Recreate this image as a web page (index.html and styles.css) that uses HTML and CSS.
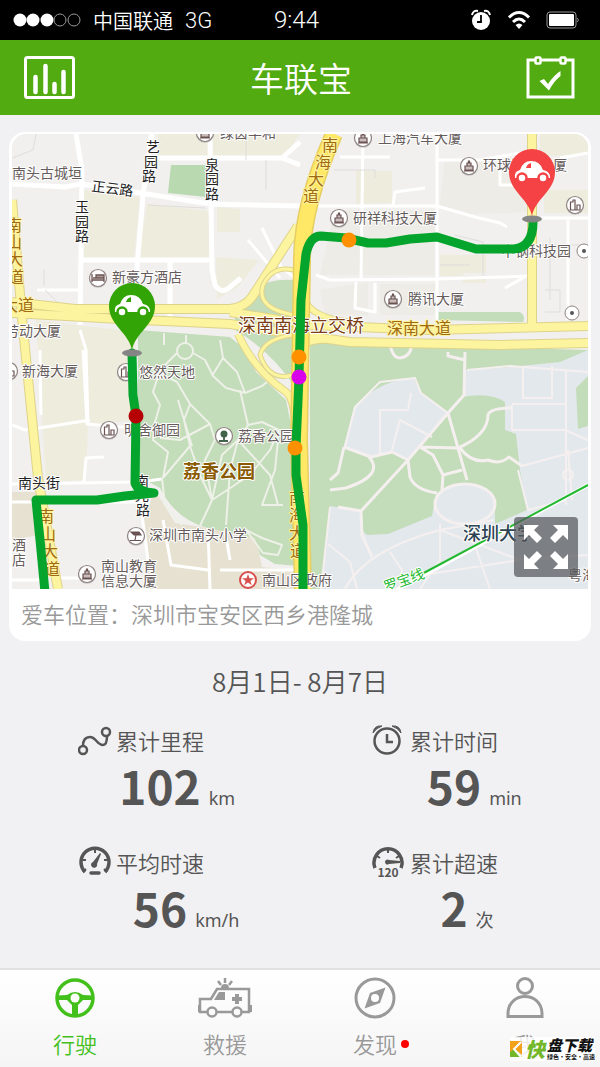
FILE: index.html
```html
<!DOCTYPE html>
<html lang="zh-CN">
<head>
    <meta charset="UTF-8">
    <meta name="viewport" content="width=device-width, initial-scale=1.0">
    <title>车联宝</title>
    <link rel="stylesheet" href="styles.css">
</head>
<body>
    <div class="status-bar">
        <div class="carrier">
            <svg width="68" height="16" viewBox="0 0 68 16">
                <g fill="#fff"><circle cx="7" cy="8" r="6.500"/><circle cx="20" cy="8" r="6.500"/><circle cx="34" cy="8" r="6.500"/></g>
                <g fill="none" stroke="#999" stroke-width="1"><circle cx="47" cy="8" r="6"/><circle cx="61" cy="8" r="6"/></g>
            </svg>
            <span>中国联通</span>
            <span class="network">3G</span>
        </div>
        <span class="time">9:44</span>
        <div class="indicators">
            <svg width="22" height="24" viewBox="0 0 22 24">
                <circle cx="11" cy="13" r="9" fill="#fff"/>
                <path d="M2 7 Q3 2 8 3M20 7 Q19 2 14 3" fill="none" stroke="#fff" stroke-width="2"/>
                <path d="M11 7v7H7" fill="none" stroke="#000" stroke-width="1.8"/>
            </svg>
            <svg width="24" height="22" viewBox="0 0 24 22">
                <g fill="none" stroke="#fff" stroke-width="3"><path d="M2 8.500Q12-1.500 22 8.500"/><path d="M6 13Q12 7 18 13"/></g>
                <path d="M12 20l-3.500-4Q12 13 15.500 16z" fill="#fff"/>
            </svg>
            <svg width="34" height="20" viewBox="0 0 34 20">
                <rect x="1" y="2" width="29" height="16" rx="3" fill="none" stroke="#999"/>
                <rect x="3" y="4" width="25" height="12" rx="1" fill="#fff"/>
                <path d="M31 8q3 2 0 4" fill="none" stroke="#999"/>
            </svg>
        </div>
    </div>

    <header class="header">
        <button type="button" class="icon-button" aria-label="统计">
            <svg width="52" height="44" viewBox="0 0 52 44" fill="none" stroke="#fff">
                <rect x="1.500" y="1.500" width="48" height="40" rx="2" stroke-width="3"/>
                <path d="M11.500 21v15M21.500 10v26M30.500 28v8M39.500 16v20" stroke-width="4.500" stroke-linecap="round"/>
            </svg>
        </button>
        <h1>车联宝</h1>
        <button type="button" class="icon-button" aria-label="签到">
            <svg width="50" height="44" viewBox="0 0 50 44" fill="none" stroke="#fff">
                <path d="M9 4H2v37h45V4h-7M15 4h19" stroke-width="3"/>
                <rect x="9.500" y="1.500" width="5" height="6" rx="1" stroke-width="2.500"/>
                <rect x="34.500" y="1.500" width="5" height="6" rx="1" stroke-width="2.500"/>
                <path d="M13.500 25l4.500-2 4 5Q28 19 34.500 15v5Q28 25 23 34.500z" fill="#fff" stroke="none"/>
            </svg>
        </button>
    </header>

    <main>
        <section class="map-card">
            <div class="map">
                <svg class="map-view" viewBox="12 134 576 455" role="img" aria-label="行驶轨迹地图">
                    <defs>
                        <g id="ring"><circle r="9" cy="1" fill="#aaa" opacity=".5"/><circle r="8.500" fill="#fff" stroke="#8f8382" stroke-width="1.200"/></g>
                        <g id="tower"><use href="#ring"/><path d="M-5 5h10M-4 4v-4h2v-3h1.500v-2h1v2H2v3h2v4zM-2 0h4" fill="#cbbcbc" stroke="#6b5352" stroke-width="1.200"/></g>
                        <g id="block"><use href="#ring"/><path d="M-4.500 5V-3h2.500v-2H0V5M2 5V0h3v5M-5.500 5h11" fill="none" stroke="#6b5352" stroke-width="1.200"/></g>
                        <g id="hotel"><use href="#ring"/><path d="M-6-4v8M-6 2H6M6-1v5M-5 0h11v-3H-2v3z" fill="#ad9c9b" stroke="#6b5352" stroke-width="1.300"/></g>
                        <g id="tree"><use href="#ring"/><circle cy="-2" r="3.500" fill="#41634a"/><path d="M0-2v7M-5 5h9" stroke="#41634a" stroke-width="1.800"/></g>
                        <g id="school"><use href="#ring"/><path d="M-5-4h8l2 3h-7zM0-1l-1 5M-6 4.500h11" fill="#6b5352" stroke="#6b5352" stroke-width="1.200"/></g>
                        <g id="spot"><circle r="7" fill="#fff" stroke="#8f8382"/><circle r="2" fill="#555"/></g>
                        <g id="pin">
                            <path d="M0 0C-3-17-23-25-23-44a23 23 0 0 1 46 0C23-25 3-17 0 0z"/>
                            <path d="M-17-38q-1-7 5-8 3-9 11-9 9 0 12 9 6 1 7 6v2z" fill="#fff"/>
                            <path d="M-6-48q1-4 5-5v5z"/>
                            <g fill="#fff" stroke-width="2.500"><circle cx="-10" cy="-38" r="4.500"/><circle cx="11" cy="-38" r="4.500"/></g>
                        </g>
                    </defs>

                    <rect x="12" y="134" width="576" height="455" fill="#f1f0ee"/>

                    <!-- city blocks -->
                    <g fill="#eeecdd">
                        <path d="M158 134H300L283 158 158 158z"/>
                        <path d="M84 190L140 197 134 258H84zM147 204L209 211V260H138zM217 207L240 209V232H217zM216 257L259 260 238 287 217 299z"/>
                        <path d="M36 320L135 332 137 420 88 425 86 480 46 482z"/>
                        <path d="M12 492L38 492 44 534 12 540zM155 490L175 523 255 535 262 567 297 570V589H150L143 520z" fill="#e6e1d1"/>
                        <path d="M356 171H392V203L356 204zM544 190H588V213H544zM440 255H486V276H440zM463 283H486V273H463zM540 134H588V155L540 156z"/>
                        <path d="M445 158L530 166V212L470 214 440 205zM335 210H435V275H320zM320 290L368 282V316L325 315zM380 284H435V315H380z" fill="#edece6"/>
                    </g>
                    <path d="M171 165H208L206 197 168 193z" fill="#b9d9b0"/>

                    <!-- park and campus -->
                    <g fill="#c3dcb9">
                        <path d="M138 330L230 337Q248 350 256 372L286 400 294 440 298 566 275 564 260 555 255 538 208 528Q176 520 160 488L138 476z"/>
                        <path d="M258 288Q270 278 295 280V387Q270 350 235 330V305z"/>
                        <path d="M437 312H520Q526 316 523 322L437 320z"/>
                    </g>
                    <path d="M312 350L588 350V589H312z" fill="#e3e8ed"/>
                    <g fill="#c3dcb9">
                        <path d="M310 342L370 344 588 350 560 362 500 368 465 370 463 395 448 413 421 393 414 379Q382 378 354 407L344 445 330 506 321 589H310z"/>
                        <path d="M344 447L371 457 392 452 410 460 362 511 330 506 336 468z"/>
                        <path d="M362 512L408 460 449 412 462 397Q490 392 505 402V430L516 434 520 470 527 510 495 524V497Q480 483 457 484L436 494 432 516 388 534 367 535 362 530z"/>
                        <path d="M576 388L588 376V426L578 429z"/>
                    </g>
                    <ellipse cx="465" cy="504" rx="30" ry="20" fill="#e3e8ed" stroke="#f5f0ef" stroke-width="3"/>

                    <!-- minor roads -->
                    <g fill="none" stroke="#fff" stroke-width="5" stroke-linejoin="round">
                        <path d="M76 134L82 170 80 325M12 184L65 187 81 184 147 194 210 204 300 206M152 134L143 195 137 268V325M210 134L212 270 215 285Q222 295 230 287L241 278M80 260H212M158 158H282L300 142M170 262V318M282 158L300 165"/>
                        <path d="M262 228L281 267 300 282M248 240L280 278M37 290H82M12 484L140 482 162 479M88 425L86 350 80 330M40 350L41 415M83 350L87 424 132 428M12 425L25 430 65 424 90 420M84 482L86 458 104 457M12 502H150M12 580H40M55 578H90M140 500L148 560M208 528L210 589M163 520L171 565 208 570M225 530L230 560M220 570H300" stroke-width="3"/>
                        <path d="M315 206H437L475 217 500 223 507 227M437 134V320M363 134L361 280M438 160H480L520 153M340 157H390M316 275L330 280 437 279 530 276M375 283V312L355 308 356 282M505 288L530 274M540 218H588M568 218V320M393 205L395 192 425 188M560 158L588 153M500 170V185H528" stroke-width="3"/>
                    </g>
                    <g fill="none" stroke="#dedddb" stroke-width="1">
                        <path d="M36 134L33 150 12 158M44 270V286M45 290L60 305M246 134V160M266 160V190M148 205L205 208M334 170H375V178M455 235L483 242V276M542 245H588M545 290H560V312H545M550 238V300M440 265H470"/>
                    </g>

                    <!-- paths in the park -->
                    <g fill="none" stroke="#eef1e8" stroke-width="2" stroke-linejoin="round">
                        <circle cx="185" cy="351" r="8"/>
                        <path d="M164 333V345M186 335V343M193 353L205 360 213 376 226 388 245 393 262 386 272 378M177 353L160 370 153 392 160 405 155 422 153 440 168 452 163 478M163 478L190 446 184 420 190 404 177 382 160 373M190 404L210 424 215 440 205 460 212 500 200 526M210 424L180 440 160 438M190 446L200 475 212 500 250 475 270 450 279 430 262 422 248 425 238 440 230 470 226 525M238 440L270 475 278 505M248 425L240 390M212 376L223 358 237 372 245 393M279 430L275 470 262 505 283 505M162 478L165 505 182 525M246 530L262 538 282 545 278 555 263 553zM223 358L220 340M238 440L222 455 212 500M192 446L178 400"/>
                    </g>
                    <g fill="none" stroke="#f5f0ef" stroke-width="3" stroke-linejoin="round">
                        <path d="M338 507L361 511 408 460 448 413 464 395 465 352M344 447L371 457 392 452 408 460 410 477Q415 490 437 493M448 413L458 448 467 480M458 448L420 447 433 455 443 475 442 490M458 448Q488 435 488 415 490 408 512 408M460 448Q472 464 488 460 500 465 509 457L522 466M369 457Q385 475 346 488L330 490M344 447L338 473 330 480M390 343Q392 358 400 358 410 357 412 345M448 352V356L465 360M443 475L462 470M361 511L362 535 372 557"/>
                        <path stroke-width="2" d="M345 447L355 407 380 382 415 378 421 393 448 413M380 454V410H408L411 393M392 450L400 420 432 437M467 370L510 366 588 372M523 366V398H552V366M512 404H566M512 430H565L588 440M566 370V505M512 430V405M522 466L588 448M518 470L528 510 566 500M330 507L321 589M328 544L350 562 357 589M345 589Q365 550 440 530L494 520M440 524V560L420 589M470 531L490 589M390 552L402 570 400 589M440 530L520 560 588 555M410 577L520 560M568 450L572 500"/>
                        <circle cx="568" cy="475" r="5" stroke-width="2"/>
                    </g>

                    <!-- avenues -->
                    <g fill="none" stroke-linejoin="round">
                        <g stroke="#ded38b" stroke-width="10">
                            <path d="M12 200L22 318 38 478 58 589M12 302L75 309 230 309Q245 307 252 297L298 226M12 313L120 319 230 324 300 335 350 342 500 345 588 343M230 312L310 325 430 330 588 326M532 134V328"/>
                            <path d="M238 334Q254 370 286 392 294 398 296 430" stroke-width="8"/>
                            <path d="M305 300Q312 318 350 322M296 352Q305 339 330 340" stroke-width="7"/>
                        </g>
                        <g stroke="#fdf49f" stroke-width="8">
                            <path d="M12 200L22 318 38 478 58 589M12 302L75 309 230 309Q245 307 252 297L298 226M12 313L120 319 230 324 300 335 350 342 500 345 588 343M230 312L310 325 430 330 588 326M532 134V328"/>
                            <path d="M238 334Q254 370 286 392 294 398 296 430" stroke-width="6"/>
                            <path d="M305 300Q312 318 350 322M296 352Q305 339 330 340" stroke-width="5"/>
                        </g>
                        <g stroke="#ded38b" stroke-width="5"><path d="M300 272Q274 262 263 285 255 310 300 316M296 374Q270 384 260 355 265 337 300 334"/></g>
                        <g stroke="#fdf49f" stroke-width="3"><path d="M300 272Q274 262 263 285 255 310 300 316M296 374Q270 384 260 355 265 337 300 334"/></g>
                        <path d="M334 134Q302 206 302 260L299 440 303 589" stroke="#e6ce63" stroke-width="18"/>
                        <path d="M334 134Q302 206 302 260L299 440 303 589" stroke="#ffe866" stroke-width="15"/>
                    </g>
                    <path d="M375 602L588 485" stroke="#fff" stroke-width="4"/>
                    <path d="M420 575L588 485" stroke="#22b930" stroke-width="2"/>

                    <!-- places -->
                    <g>
                        <use href="#tower" x="205" y="133"/><use href="#tower" x="363" y="138"/>
                        <use href="#tower" x="469" y="166"/><use href="#tower" x="339" y="218"/>
                        <use href="#tower" x="393" y="299"/><use href="#tower" x="87" y="574"/>
                        <use href="#hotel" x="98" y="278"/><use href="#block" x="575" y="205"/>
                        <use href="#block" x="126" y="372"/><use href="#block" x="109" y="430"/>
                        <use href="#block" x="9" y="371"/><use href="#tree" x="224" y="436"/>
                        <use href="#school" x="136" y="536"/>
                        <use href="#spot" x="584" y="251"/><use href="#spot" x="572" y="313"/>
                    </g>
                    <circle cx="248" cy="580" r="8" fill="#fff" stroke="#d8504e" stroke-width="2"/>
                    <path d="M248 574l1.500 4.200h4.500l-3.600 2.700 1.400 4.300-3.800-2.600-3.800 2.600 1.400-4.300-3.600-2.700h4.500z" fill="#d8504e"/>

                    <g class="place">
                        <text x="12" y="178">南头古城垣</text>
                        <text x="220" y="138">绿茵丰和</text>
                        <text x="112" y="282">新豪方酒店</text>
                        <text x="5" y="336">劳动大厦</text>
                        <text x="22" y="376">新海大厦</text>
                        <text x="139" y="377">悠然天地</text>
                        <text x="124" y="435">明舍御园</text>
                        <text x="238" y="441">荔香公园</text>
                        <text x="149" y="540">深圳市南头小学</text>
                        <text x="101" y="571">南山教育</text>
                        <text x="101" y="586">信息大厦</text>
                        <text x="12 12" y="550 565">酒店</text>
                        <text x="262" y="585">南山区政府</text>
                        <text x="378" y="143">上海汽车大厦</text>
                        <text x="483" y="170">环球数码大厦</text>
                        <text x="353" y="223">研祥科技大厦</text>
                        <text x="501" y="256">中钢科技园</text>
                        <text x="408" y="304">腾讯大厦</text>
                        <text x="568" y="580">粤海</text>
                    </g>
                    <g class="street">
                        <text x="91" y="191" transform="rotate(7 91 191)">正云路</text>
                        <text x="146 144 142" y="152 167 181">艺园路</text>
                        <text x="205 205 205" y="170 184 199">泉园路</text>
                        <text x="75 75 75" y="212 227 241">玉园路</text>
                        <text x="18" y="488">南头街</text>
                        <text x="135 135 136" y="486 500 515">南光路</text>
                    </g>
                    <g class="avenue">
                        <text x="6 6 7 8" y="231 248 265 283">南山大道</text>
                        <text x="38 40 42 44" y="522 540 557 575">南山大道</text>
                        <text x="322 315 308 303" y="151 168 185 202">南海大道</text>
                        <text x="289 289 289 290" y="504 521 539 557">南海大道</text>
                        <text x="2" y="311">大道</text>
                        <text x="387" y="334">深南大道</text>
                    </g>
                    <text class="bridge" x="238" y="332">深南南海立交桥</text>
                    <text class="park-name" x="183" y="478">荔香公园</text>
                    <text class="campus-name" x="463" y="540">深圳大学</text>
                    <text class="metro" x="386" y="592" transform="rotate(-20 386 592)">罗宝线</text>

                    <!-- driven route -->
                    <g fill="none" stroke="#05a42c" stroke-width="9" stroke-linejoin="round">
                        <path d="M132 353L133 395 136 416 135 483Q138 492 154 493L125 496 97 500 36 500 40 540 45 592" stroke-linecap="round"/>
                        <path d="M303 592V525L296 475 296 447 299 377 301 300 306 254Q310 236 321 236L346 238 368 243H386L410 239 437 237 476 249H514Q534 247 533 219"/>
                    </g>
                    <g fill="#ff9000"><circle cx="349" cy="240" r="7.500"/><circle cx="299" cy="357" r="7.500"/><circle cx="295" cy="448" r="7.500"/></g>
                    <circle cx="299" cy="377" r="7.500" fill="#d900ea"/>
                    <circle cx="136" cy="416" r="7.500" fill="#b50006"/>
                    <g fill="#858585"><ellipse cx="132" cy="353" rx="10" ry="3.500"/><ellipse cx="532" cy="219" rx="10" ry="3.500"/></g>
                    <use href="#pin" x="132" y="350" fill="#33a406" stroke="#33a406" stroke-width="0"/>
                    <use href="#pin" x="532" y="216" fill="#f44245" stroke="#f44245" stroke-width="0"/>
                </svg>
                <button type="button" class="expand" aria-label="全屏">
                    <svg width="44" height="44" viewBox="0 0 44 44" fill="#fff">
                        <path id="arrow" d="M0 0h15l-5 5 8 8-5 5-8-8-5 5z"/>
                        <use href="#arrow" transform="matrix(-1 0 0 1 44 0)"/>
                        <use href="#arrow" transform="matrix(1 0 0 -1 0 44)"/>
                        <use href="#arrow" transform="rotate(180 22 22)"/>
                    </svg>
                </button>
            </div>
            <p class="location">爱车位置：深圳市宝安区西乡港隆城</p>
        </section>

        <h2 class="period">8月1日- 8月7日</h2>

        <section class="stats">
            <div class="stat">
                <svg class="stat-icon" viewBox="0 0 34 34" fill="none" stroke="#555" stroke-width="2.500">
                    <circle cx="5" cy="27" r="4"/><circle cx="28" cy="9" r="4"/>
                    <path d="M5 23Q5 14 12 14C18 14 19 22 25 22Q29 22 29 13"/>
                </svg>
                <h3>累计里程</h3>
                <p class="value"><strong>102</strong><span>km</span></p>
            </div>
            <div class="stat">
                <svg class="stat-icon" viewBox="0 0 34 34" fill="none" stroke="#555" stroke-width="2.500">
                    <circle cx="15" cy="18" r="12.500"/><path d="M15 11v8h6"/>
                    <path d="M1 10Q2 2 10 3 4 5 1 10zM29 10Q28 2 20 3 26 5 29 10z" fill="#555" stroke-width="1"/>
                </svg>
                <h3>累计时间</h3>
                <p class="value"><strong>59</strong><span>min</span></p>
            </div>
            <div class="stat">
                <svg class="stat-icon" viewBox="0 0 34 34" fill="none" stroke="#555">
                    <path d="M7 27A14 14 0 1 1 27 27" stroke-width="3.500"/>
                    <path d="M17 4v4M4 15h4M30 15h-4M8 24l-3 3M26 24l3 3" stroke-width="2"/>
                    <path d="M22 8l1 1-4 10a3 3 0 1 1-4-2z" fill="#555" stroke="none"/>
                    <path d="M13 28h8" stroke-width="3.500" stroke-linecap="round"/>
                </svg>
                <h3>平均时速</h3>
                <p class="value"><strong>56</strong><span>km/h</span></p>
            </div>
            <div class="stat">
                <svg class="stat-icon" viewBox="0 0 34 34" fill="none" stroke="#555">
                    <path d="M3 23A14 14 0 1 1 29 23" stroke-width="3.500"/>
                    <path d="M16 4v4M5 11l3 2M27 11l-3 2" stroke-width="2"/>
                    <path d="M28 16v2l-11 1a2.500 2.500 0 1 1 0-4z" fill="#555" stroke="none"/>
                    <text class="limit" x="16" y="32" text-anchor="middle">120</text>
                </svg>
                <h3>累计超速</h3>
                <p class="value"><strong>2</strong><span>次</span></p>
            </div>
        </section>
    </main>

    <nav class="tab-bar">
        <a href="#drive" class="tab active">
            <svg width="42" height="42" viewBox="0 0 42 42" fill="none" stroke="currentColor">
                <circle cx="21" cy="21" r="18" stroke-width="3.500"/>
                <path d="M3 18.500L13 18Q21 12 29 18l10 .5v4.500H29L24 28V39H18V28L13 23H3z" fill="currentColor" stroke="none"/>
                <circle cx="21" cy="21" r="4.500" fill="#fff" stroke="none"/>
            </svg>
            <span>行驶</span>
        </a>
        <a href="#rescue" class="tab">
            <svg width="56" height="42" viewBox="0 0 56 42" fill="none" stroke="currentColor" stroke-width="2.500">
                <path d="M10 35H3V22H14L20 12H52V35H45M35 35H20"/>
                <path d="M2 28v7M54 28v7" stroke-width="2"/>
                <path d="M17 23l5-8h6v8z" fill="currentColor" stroke="none"/>
                <path d="M40 17v10M35 22h10" stroke-width="4"/>
                <circle cx="15" cy="35" r="4.500"/><circle cx="40" cy="35" r="4.500"/>
                <path d="M24 11q0-4 4-4t4 4z" fill="currentColor" stroke="none"/>
                <path d="M28 1v5M21 4l3 4M35 4l-3 4" stroke-width="2.500"/>
            </svg>
            <span>救援</span>
        </a>
        <a href="#discover" class="tab">
            <svg width="42" height="42" viewBox="0 0 42 42" fill="none" stroke="currentColor">
                <circle cx="21" cy="21" r="19" stroke-width="3"/>
                <path d="M31.500 10.500L26 26 10.500 31.500 16 16z" fill="currentColor" stroke="none"/>
                <circle cx="21" cy="21" r="4" fill="#fff" stroke="none"/>
            </svg>
            <span class="new">发现</span>
        </a>
        <a href="#me" class="tab">
            <svg width="40" height="42" viewBox="0 0 40 42" fill="none" stroke="currentColor" stroke-width="3">
                <circle cx="20" cy="9" r="7.500"/><path d="M3 39.500V36C4 14 36 14 37 36v3.500z"/>
            </svg>
            <span>我</span>
        </a>
    </nav>

    <div class="watermark">
        <svg width="13" height="18" viewBox="0 0 13 18">
            <path d="M0 1H12L4 9 0 13z" fill="#f3a01b"/><path d="M0 17V12L5 8 12 17z" fill="#74b82a"/><path d="M12 2v13L5 9z" fill="#f3a01b"/>
            <path d="M11 2L4 9l7 8" fill="none" stroke="#fff" stroke-width="2"/>
        </svg>
        <b class="quick">快</b>
        <div>
            <b class="site">盘下载</b>
            <small>绿色·安全·高速</small>
        </div>
    </div>
</body>
</html>
```
FILE: styles.css
```css
* {
    box-sizing: border-box;
}

body {
    position: relative;
    display: flex;
    flex-direction: column;
    min-height: 100vh;
    margin: 0;
    background-color: #f1f1f3;
    color: #555;
    font-family: "Noto Sans CJK SC", "Noto Sans", sans-serif;
    font-weight: 350;
}

h1, h2, h3, p {
    margin: 0;
    font-weight: 350;
}

svg {
    display: block;
    flex-shrink: 0;
}

button {
    padding: 0;
    border: none;
    background: none;
    cursor: pointer;
}

.status-bar {
    display: grid;
    grid-template-columns: 1fr auto 1fr;
    align-items: center;
    height: 40px;
    padding: 0 20px 0 13px;
    background-color: #000;
    color: #fff;
    font-size: 20px;
}

.carrier {
    display: flex;
    align-items: center;
    gap: 12px;
}

.network, .time {
    font-family: Roboto, "Liberation Sans", sans-serif;
    font-size: 22px;
    font-weight: 300;
}

.time {
    font-size: 24px;
}

.indicators {
    display: flex;
    align-items: center;
    justify-content: flex-end;
    gap: 15px;
}

.header {
    display: flex;
    align-items: center;
    justify-content: space-between;
    height: 75px;
    padding: 0 24px;
    background-color: #52ab10;
    color: #fff;
}

.header h1 {
    font-size: 34px;
    line-height: 44px;
}

.map-card {
    margin: 17px 9px 0;
    padding: 2px 3px 0;
    border-radius: 16px;
    background-color: #fff;
}

.map {
    position: relative;
    overflow: hidden;
    border-radius: 14px 14px 0 0;
}

.map-view {
    width: 100%;
    height: auto;
}

.map-view text {
    paint-order: stroke;
    stroke: #fff;
    stroke-width: 2px;
    stroke-linejoin: round;
    font-weight: 400;
}

.place {
    fill: #665c5b;
    font-size: 14px;
}

.street {
    fill: #222;
    font-size: 14px;
}

.avenue {
    fill: #a06b10;
    font-size: 16px;
}

.map-view .avenue text {
    stroke: #fff3a0;
}

.bridge {
    fill: #7a3c12;
    font-size: 18px;
}

.map-view .park-name {
    fill: #8a5a00;
    font-size: 18px;
    font-weight: 700;
}

.map-view .campus-name {
    fill: #2c4453;
    font-size: 18px;
    font-weight: 500;
}

.metro {
    fill: #22b930;
    font-size: 14px;
}

.expand {
    position: absolute;
    right: 10px;
    bottom: 12px;
    display: grid;
    place-items: center;
    width: 64px;
    height: 60px;
    border-radius: 4px;
    background-color: rgba(85, 88, 92, 0.72);
}

.location {
    padding: 8px 9px 12px;
    color: #999;
    font-size: 22px;
    line-height: 32px;
}

.period {
    margin-top: 22px;
    font-size: 26px;
    line-height: 36px;
    text-align: center;
}

.stats {
    display: grid;
    grid-template-columns: auto auto;
    justify-content: space-between;
    row-gap: 32px;
    padding: 24px 17% 8px 13%;
}

.stat {
    display: grid;
    grid-template-columns: 38px 88px;
    align-items: center;
}

.stat-icon {
    width: 34px;
    height: 34px;
}

.map-view .limit, .limit {
    fill: #555;
    stroke: none;
    font-size: 12px;
    font-weight: 700;
}

.stat h3 {
    font-size: 22px;
    line-height: 34px;
}

.value {
    grid-column: 2;
    display: grid;
    grid-template-columns: minmax(0, 1fr) auto minmax(0, 1fr);
    align-items: baseline;
    height: 56px;
    line-height: 56px;
}

.value strong {
    grid-column: 2;
    font-size: 46px;
    font-weight: 700;
}

.value span {
    margin-left: 8px;
    font-family: "Noto Sans", "Noto Sans CJK SC", sans-serif;
    font-size: 18px;
    font-weight: 400;
    white-space: nowrap;
}

.tab-bar {
    display: grid;
    grid-template-columns: repeat(4, 1fr);
    margin-top: auto;
    border-top: 2px solid #e1e1e1;
    background: linear-gradient(#fff, #f5f5f5);
}

.tab {
    display: flex;
    flex-direction: column;
    align-items: center;
    gap: 8px;
    padding: 7px 0 8px;
    color: #999;
    font-size: 22px;
    line-height: 32px;
    text-decoration: none;
}

.tab.active {
    color: #43c01c;
}

.new {
    position: relative;
}

.new::after {
    content: "";
    position: absolute;
    top: 13px;
    left: 100%;
    width: 8px;
    height: 8px;
    margin-left: 4px;
    border-radius: 50%;
    background-color: #f00;
}

.watermark {
    position: absolute;
    right: 5px;
    bottom: 6px;
    display: flex;
    align-items: center;
    gap: 2px;
    background-color: rgba(255, 255, 255, 0.8);
    color: #111;
    font-weight: 700;
}

.quick {
    color: #74b82a;
    font-size: 20px;
    font-style: italic;
    line-height: 24px;
}

.site {
    display: block;
    font-size: 15px;
    font-style: italic;
    line-height: 16px;
}

.watermark small {
    display: block;
    font-size: 6px;
    line-height: 8px;
}
```
